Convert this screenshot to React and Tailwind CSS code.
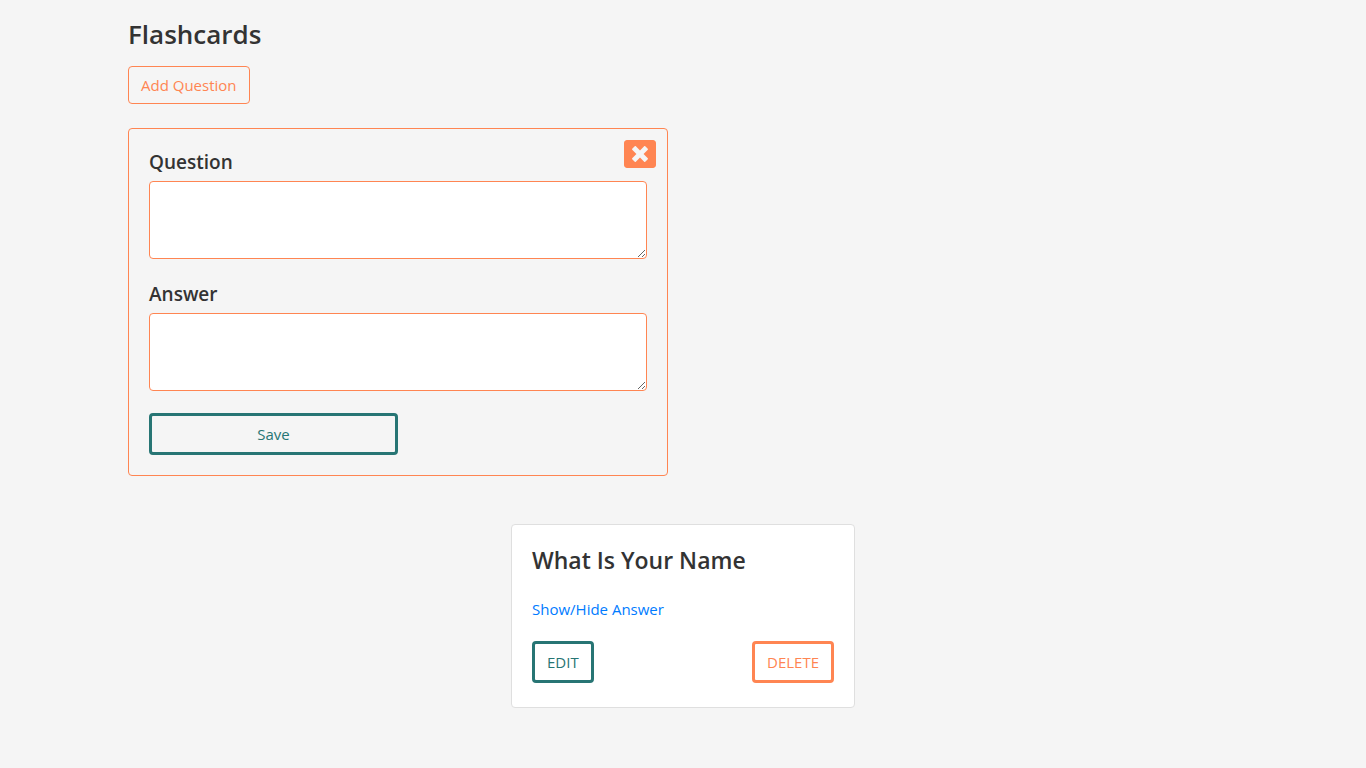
import { useState } from 'react';
import { FaWindowClose } from 'react-icons/fa';

function Field({ id, label }) {
  return (
    <div className="flex flex-col gap-1.5">
      <label htmlFor={id} className="text-[19px] leading-[26px] font-semibold">{label}</label>
      <textarea id={id} className="block h-[78px] w-full resize rounded border border-[#ff8552] bg-white px-3 py-1.5 text-[15px] leading-6 outline-none" />
    </div>
  );
}

function QuestionForm({ onClose }) {
  return (
    <form
      onSubmit={(e) => e.preventDefault()}
      className="relative flex w-full max-w-[540px] flex-col gap-[22px] rounded border border-[#ff8552] p-5"
    >
      <button type="button" aria-label="Close" onClick={onClose} className="absolute top-[9px] right-[11px] text-[32px] text-[#ff8552]">
        <FaWindowClose className="block" />
      </button>
      <Field id="question" label="Question" />
      <Field id="answer" label="Answer" />
      <button type="submit" className="w-1/2 rounded border-3 border-[#277574] px-3 py-1.5 text-[15px] leading-6 text-[#277574]">
        Save
      </button>
    </form>
  );
}

function Flashcard({ question, answer }) {
  const [shown, setShown] = useState(false);
  return (
    <article className="w-full max-w-[344px] rounded border border-[#dfdfdf] bg-white px-5 pt-5 pb-6">
      <h2 className="text-[23px] leading-[30px] font-semibold">{question}</h2>
      <a
        href="#answer"
        onClick={(e) => {
          e.preventDefault();
          setShown(!shown);
        }}
        className="mt-[22px] block text-[15px] leading-6 text-[#007bff]"
      >
        Show/Hide Answer
      </a>
      {shown && <p className="mt-2 text-[15px] leading-6">{answer}</p>}
      <div className="mt-5 flex justify-between">
        <button type="button" className="rounded border-3 border-[#277574] px-3 py-1.5 text-[15px] leading-6 text-[#277574]">EDIT</button>
        <button type="button" className="rounded border-3 border-[#ff8552] px-3 py-1.5 text-[15px] leading-6 text-[#ff8552]">DELETE</button>
      </div>
    </article>
  );
}

export default function App() {
  const [open, setOpen] = useState(true);
  return (
    <div className="min-h-screen bg-[#f5f5f5] font-['Open_Sans',sans-serif] text-[#333333]">
      <main className="mx-auto flex max-w-[1110px] flex-col pt-4 pb-12">
        <h1 className="text-[26px] leading-9 font-semibold">Flashcards</h1>
        <button
          type="button"
          onClick={() => setOpen(true)}
          className="mt-3.5 mb-6 self-start rounded border border-[#ff8552] px-3 py-1.5 text-[15px] leading-6 text-[#ff8552]"
        >
          Add Question
        </button>
        {open && <QuestionForm onClose={() => setOpen(false)} />}
        <section className="mt-12 flex justify-center">
          <Flashcard question="What Is Your Name" answer="" />
        </section>
      </main>
    </div>
  );
}
